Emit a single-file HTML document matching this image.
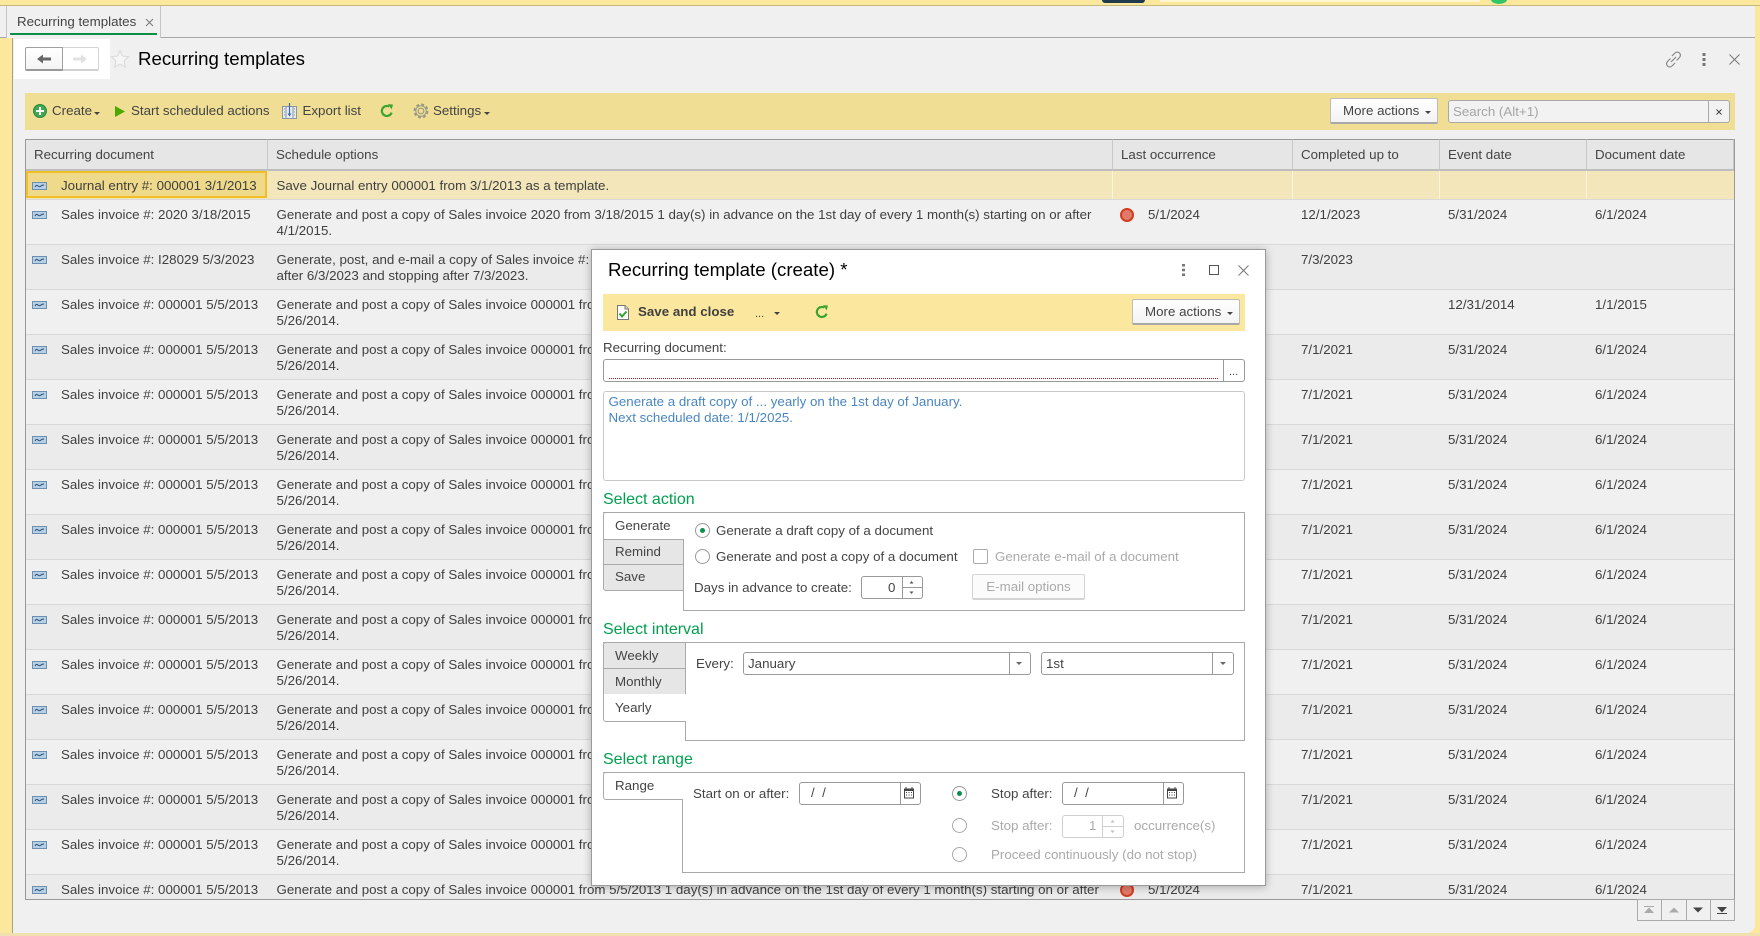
<!DOCTYPE html>
<html><head><meta charset="utf-8"><title>Recurring templates</title>
<style>
*{box-sizing:border-box}
html,body{margin:0;padding:0;width:1760px;height:936px;overflow:hidden;background:#fbe89c;font-family:"Liberation Sans",Arial,sans-serif;font-size:13.33px;color:#444}
div,span,svg{position:absolute}
.t{white-space:nowrap;line-height:16px}
.g{color:#aaa}
.h{color:#00a04e;font-size:16px;line-height:18px;white-space:nowrap;position:absolute;left:603px}
.r{left:26px;width:1708px;height:45px;border-bottom:1px solid #d9d9d9;overflow:hidden}
.l{background:#f0f0f0}.d{background:#ebebeb}
.r span{white-space:nowrap;line-height:16px;top:7px;color:#404040}
.a{left:35px}.b{left:250.500px}.c{left:1122px}.e{left:1275px}.f{left:1422px}.i{left:1569px}
.ic{left:6px;top:11px;width:15px;height:8px}
.dot{left:1094px;top:8px;width:14px;height:14px;border-radius:50%;background:#e27a6b;border:2px solid #d23c1f}
.k{top:139px;height:32px;background:#e6e6e6;border-right:1px solid #c8c8c8;border-bottom:2px solid #bdbdbd;line-height:29px;padding-left:8px;white-space:nowrap;color:#444;border-top:1px solid #999}
.btn{background:linear-gradient(#fff,#f3f3f3);border:1px solid #bcbcbc;border-bottom:2px solid #a8a8a8;border-radius:2px;white-space:nowrap;color:#444;line-height:24px}
.car{width:0;height:0;border-left:3px solid transparent;border-right:3px solid transparent;border-top:3px solid #444}
.box{background:#fff;border:1px solid #a9a9a9}
.tab{left:603px;border:1px solid #a9a9a9;background:#e6e6e6;padding-left:11px;color:#444;white-space:nowrap}
.tw{background:#fff;border-right:none}
.inp{background:#fff;border:1px solid #999;border-radius:3px}
.sp{top:0;bottom:0;width:1px;background:#999}
.rad{width:15px;height:15px;border-radius:50%;border:1px solid #999;background:#fff}
.rad i{position:absolute;left:4px;top:4px;width:5px;height:5px;border-radius:50%;background:#0a8f4c}
</style></head><body>
<svg width="0" height="0" style="left:0;top:0"><defs>
<symbol id="ri" viewBox="0 0 15 8"><rect x=".5" y=".5" width="14" height="7" fill="#b5cfe6" stroke="#6d90b0"/><path d="M3 5c1-2 2-2 3-1s2 1 3 0 2-1 3-1" fill="none" stroke="#2d4f70" stroke-width="1"/></symbol>
<symbol id="ref" viewBox="0 0 14 14"><path d="M11.600 8.600A5 5 0 1 1 9.300 2.600" fill="none" stroke="#3aa52e" stroke-width="2.200"/><path d="M8 0l5 .6-1.400 4.800z" fill="#3aa52e"/></symbol>
<symbol id="cal" viewBox="0 0 10 12"><rect x="0" y="1.500" width="10" height="10" fill="#444"/><rect x="1" y="4" width="8" height="6.500" fill="#fff"/><path d="M2 0v3M8 0v3" stroke="#444"/><path d="M2 5h1v1H2zM4.500 5h1v1h-1zM7 5h1v1H7zM2 7.500h1v1H2zM4.500 7.500h1v1h-1zM7 7.500h1v1H7z" fill="#444"/></symbol>
</defs></svg>

<!-- top strip -->
<div style="left:0;top:0;width:1760px;height:6px;background:#fbe89c;border-bottom:1px solid #c4b87e"></div>
<div style="left:1102px;top:0;width:43px;height:3px;background:#1e3a4c;border-radius:0 0 3px 3px"></div>
<div style="left:1160px;top:0;width:320px;height:2px;background:#fdf6d0"></div>
<div style="left:1491px;top:-5px;width:16px;height:9px;border-radius:50%;background:#2fc765"></div>

<!-- content area -->
<div style="left:0;top:6px;width:1755px;height:32px;background:#f0f0f0"></div>
<div style="left:0;top:37px;width:1755px;height:1px;background:#a8a8a8"></div>
<div style="left:0;top:38px;width:12px;height:898px;background:#fbe89c"></div>
<div style="left:12px;top:38px;width:1px;height:895px;background:#a9a27e"></div>
<div style="left:13px;top:38px;width:1742px;height:895px;background:#f0f0f0;border-radius:0 0 8px 0"></div>
<div style="left:0;top:933px;width:1760px;height:3px;background:#f0e0b0"></div>

<!-- tab -->
<div style="left:6px;top:6px;width:155px;height:32px;background:#f0f0f0;border-left:1px solid #c4c4c4;border-right:1px solid #c4c4c4"></div>
<div class="t" style="left:17px;top:14px;color:#444">Recurring templates</div>
<svg style="left:145px;top:18px" width="9" height="9" viewBox="0 0 9 9"><path d="M1 1l7 7M8 1L1 8" stroke="#777" stroke-width="1"/></svg>
<div style="left:10px;top:33px;width:147px;height:2px;background:#0b8f45"></div>

<!-- nav -->
<div style="left:14px;top:39px;width:96px;height:40px;background:#fff"></div>
<div style="left:62px;top:47px;width:37px;height:24px;background:#fff;border:1px solid #d4d4d4;border-bottom:2px solid #d0d0d0;border-radius:0 2px 2px 0"></div>
<div style="left:25px;top:47px;width:38px;height:24px;background:linear-gradient(#fff,#f4f4f4);border:1px solid #a0a0a0;border-bottom:2px solid #999;border-radius:2px 0 0 2px"></div>
<svg style="left:37px;top:53px" width="14" height="12" viewBox="0 0 14 12"><path d="M0 6l6-4.500v3h8v3H6v3z" fill="#666"/></svg>
<svg style="left:73px;top:53px" width="14" height="12" viewBox="0 0 14 12"><path d="M14 6L8 1.500v3H0v3h8v3z" fill="#e2e2e2"/></svg>
<svg style="left:110px;top:49px" width="20" height="20" viewBox="0 0 20 20"><path d="M10 1.500l2.600 5.600 6 .7-4.500 4.100 1.300 6L10 15l-5.400 2.900 1.300-6L1.400 7.800l6-.7z" fill="#f5f5f5" stroke="#dcdcdc" stroke-width="1.200"/></svg>
<div class="t" style="left:138px;top:48px;font-size:18.67px;line-height:22px;color:#000">Recurring templates</div>
<svg style="left:1665px;top:51px" width="17" height="17" viewBox="0 0 17 17"><g fill="none" stroke="#888" stroke-width="1.200"><path d="M7 5l3-3a3 3 0 0 1 4.500 4.500L11.500 9.500"/><path d="M10 12l-3 3a3 3 0 0 1-4.500-4.500L5.500 7.500"/><path d="M6 11l5-5"/></g></svg>
<svg style="left:1702px;top:53px" width="4" height="13" viewBox="0 0 4 13"><path d="M0.500 0h3v3h-3zM0.500 5h3v3h-3zM0.500 10h3v3h-3z" fill="#777"/></svg>
<svg style="left:1729px;top:54px" width="11" height="11" viewBox="0 0 11 11"><path d="M.5.500l10 10M10.500.500l-10 10" stroke="#777" stroke-width="1"/></svg>

<!-- main toolbar -->
<div style="left:25px;top:93px;width:1710px;height:37px;background:#efde93"></div>
<svg style="left:33px;top:104px" width="14" height="14" viewBox="0 0 14 14"><circle cx="7" cy="7" r="6.500" fill="#3fa652" stroke="#2c8c40"/><path d="M6 3h2v3h3v2H8v3H6V8H3V6h3z" fill="#fff"/></svg>
<div class="t" style="left:52px;top:103px">Create</div><div class="car" style="left:94px;top:112px"></div>
<svg style="left:115px;top:106px" width="10" height="11" viewBox="0 0 10 11"><path d="M0 0l10 5.500L0 11z" fill="#4aa800"/></svg>
<div class="t" style="left:131px;top:103px">Start scheduled actions</div>
<svg style="left:282px;top:102px" width="15" height="17" viewBox="0 0 15 17"><rect x=".5" y="4.500" width="14" height="12" fill="#e6ecf2" stroke="#8a96a2"/><path d="M4 4.500v12M11 4.500v12M2 7h1M2 10h1M2 13h1M12 7h1M12 10h1M12 13h1" stroke="#8a96a2"/><path d="M7.500 1v12" stroke="#3b6ea5" stroke-width="1.200"/><path d="M5.500 11.500l2 3 2-3z" fill="#3b6ea5"/></svg>
<div class="t" style="left:302.500px;top:103px">Export list</div>
<svg style="left:380px;top:104px" width="14" height="14"><use href="#ref"/></svg>
<svg style="left:413px;top:103px" width="16" height="16" viewBox="0 0 16 16"><g fill="none" stroke="#9a9a84"><circle cx="8" cy="8" r="2.800" stroke-width="1.100"/><circle cx="8" cy="8" r="5.200" stroke-width="1"/><circle cx="8" cy="8" r="6.500" stroke-width="2" stroke-dasharray="3 2.100"/></g></svg>
<div class="t" style="left:433px;top:103px">Settings</div><div class="car" style="left:484px;top:112px"></div>
<div class="btn" style="left:1330px;top:98px;width:108px;height:26px;padding-left:12px">More actions</div><div class="car" style="left:1425px;top:111px"></div>
<div style="left:1448px;top:100px;width:282px;height:23px;background:#f2f2f2;border:1px solid #a8a8a8;border-radius:3px"></div>
<div style="left:1708px;top:100px;width:1px;height:23px;background:#a8a8a8"></div>
<div class="t g" style="left:1453px;top:104px;color:#a5a5a5">Search (Alt+1)</div>
<svg style="left:1716px;top:109px" width="6" height="6" viewBox="0 0 6 6"><path d="M.5.500l5 5M5.500.500l-5 5" stroke="#444" stroke-width="1"/></svg>

<!-- table -->
<div style="left:25px;top:139px;width:1710px;height:761px;background:#f0f0f0;border:1px solid #999"></div>
<div class="k" style="left:26px;width:242px">Recurring document</div>
<div class="k" style="left:268px;width:845px">Schedule options</div>
<div class="k" style="left:1113px;width:180px">Last occurrence</div>
<div class="k" style="left:1293px;width:147px">Completed up to</div>
<div class="k" style="left:1440px;width:147px">Event date</div>
<div class="k" style="left:1587px;width:147px">Document date</div>

<!-- row 1 -->
<div style="left:26px;top:171px;width:1708px;height:29px;background:#f2e6ba;border-bottom:1px solid #d9d9d9"></div>
<div style="left:1112px;top:171px;width:1px;height:28px;background:#fbf5de"></div>
<div style="left:1292px;top:171px;width:1px;height:28px;background:#fbf5de"></div>
<div style="left:1439px;top:171px;width:1px;height:28px;background:#fbf5de"></div>
<div style="left:1586px;top:171px;width:1px;height:28px;background:#fbf5de"></div>
<div style="left:26px;top:171px;width:241px;height:27px;background:#efd98a;border:2px solid #efbf25"></div>
<svg style="left:32px;top:182px" width="15" height="8"><use href="#ri"/></svg>
<div class="t" style="left:61px;top:178px;color:#404040">Journal entry #: 000001 3/1/2013</div>
<div class="t" style="left:276.500px;top:178px;color:#404040">Save Journal entry 000001 from 3/1/2013 as a template.</div>

<!-- rows -->
<div class="r l" style="top:200px"><svg class="ic" width="15" height="8"><use href="#ri"/></svg><span class="a">Sales invoice #: 2020 3/18/2015</span><span class="b">Generate and post a copy of Sales invoice 2020 from 3/18/2015 1 day(s) in advance on the 1st day of every 1 month(s) starting on or after<br>4/1/2015.</span><div class="dot"></div><span class="c">5/1/2024</span><span class="e">12/1/2023</span><span class="f">5/31/2024</span><span class="i">6/1/2024</span></div>
<div class="r d" style="top:245px"><svg class="ic" width="15" height="8"><use href="#ri"/></svg><span class="a">Sales invoice #: I28029 5/3/2023</span><span class="b">Generate, post, and e-mail a copy of Sales invoice #:<br>after 6/3/2023 and stopping after 7/3/2023.</span><span class="e">7/3/2023</span></div>
<div class="r l" style="top:290px"><svg class="ic" width="15" height="8"><use href="#ri"/></svg><span class="a">Sales invoice #: 000001 5/5/2013</span><span class="b">Generate and post a copy of Sales invoice 000001 from<br>5/26/2014.</span><span class="f">12/31/2014</span><span class="i">1/1/2015</span></div>
<div class="r d" style="top:335px"><svg class="ic" width="15" height="8"><use href="#ri"/></svg><span class="a">Sales invoice #: 000001 5/5/2013</span><span class="b">Generate and post a copy of Sales invoice 000001 from<br>5/26/2014.</span><span class="e">7/1/2021</span><span class="f">5/31/2024</span><span class="i">6/1/2024</span></div>
<div class="r l" style="top:380px"><svg class="ic" width="15" height="8"><use href="#ri"/></svg><span class="a">Sales invoice #: 000001 5/5/2013</span><span class="b">Generate and post a copy of Sales invoice 000001 from<br>5/26/2014.</span><span class="e">7/1/2021</span><span class="f">5/31/2024</span><span class="i">6/1/2024</span></div>
<div class="r d" style="top:425px"><svg class="ic" width="15" height="8"><use href="#ri"/></svg><span class="a">Sales invoice #: 000001 5/5/2013</span><span class="b">Generate and post a copy of Sales invoice 000001 from<br>5/26/2014.</span><span class="e">7/1/2021</span><span class="f">5/31/2024</span><span class="i">6/1/2024</span></div>
<div class="r l" style="top:470px"><svg class="ic" width="15" height="8"><use href="#ri"/></svg><span class="a">Sales invoice #: 000001 5/5/2013</span><span class="b">Generate and post a copy of Sales invoice 000001 from<br>5/26/2014.</span><span class="e">7/1/2021</span><span class="f">5/31/2024</span><span class="i">6/1/2024</span></div>
<div class="r d" style="top:515px"><svg class="ic" width="15" height="8"><use href="#ri"/></svg><span class="a">Sales invoice #: 000001 5/5/2013</span><span class="b">Generate and post a copy of Sales invoice 000001 from<br>5/26/2014.</span><span class="e">7/1/2021</span><span class="f">5/31/2024</span><span class="i">6/1/2024</span></div>
<div class="r l" style="top:560px"><svg class="ic" width="15" height="8"><use href="#ri"/></svg><span class="a">Sales invoice #: 000001 5/5/2013</span><span class="b">Generate and post a copy of Sales invoice 000001 from<br>5/26/2014.</span><span class="e">7/1/2021</span><span class="f">5/31/2024</span><span class="i">6/1/2024</span></div>
<div class="r d" style="top:605px"><svg class="ic" width="15" height="8"><use href="#ri"/></svg><span class="a">Sales invoice #: 000001 5/5/2013</span><span class="b">Generate and post a copy of Sales invoice 000001 from<br>5/26/2014.</span><span class="e">7/1/2021</span><span class="f">5/31/2024</span><span class="i">6/1/2024</span></div>
<div class="r l" style="top:650px"><svg class="ic" width="15" height="8"><use href="#ri"/></svg><span class="a">Sales invoice #: 000001 5/5/2013</span><span class="b">Generate and post a copy of Sales invoice 000001 from<br>5/26/2014.</span><span class="e">7/1/2021</span><span class="f">5/31/2024</span><span class="i">6/1/2024</span></div>
<div class="r d" style="top:695px"><svg class="ic" width="15" height="8"><use href="#ri"/></svg><span class="a">Sales invoice #: 000001 5/5/2013</span><span class="b">Generate and post a copy of Sales invoice 000001 from<br>5/26/2014.</span><span class="e">7/1/2021</span><span class="f">5/31/2024</span><span class="i">6/1/2024</span></div>
<div class="r l" style="top:740px"><svg class="ic" width="15" height="8"><use href="#ri"/></svg><span class="a">Sales invoice #: 000001 5/5/2013</span><span class="b">Generate and post a copy of Sales invoice 000001 from<br>5/26/2014.</span><span class="e">7/1/2021</span><span class="f">5/31/2024</span><span class="i">6/1/2024</span></div>
<div class="r d" style="top:785px"><svg class="ic" width="15" height="8"><use href="#ri"/></svg><span class="a">Sales invoice #: 000001 5/5/2013</span><span class="b">Generate and post a copy of Sales invoice 000001 from<br>5/26/2014.</span><span class="e">7/1/2021</span><span class="f">5/31/2024</span><span class="i">6/1/2024</span></div>
<div class="r l" style="top:830px"><svg class="ic" width="15" height="8"><use href="#ri"/></svg><span class="a">Sales invoice #: 000001 5/5/2013</span><span class="b">Generate and post a copy of Sales invoice 000001 from<br>5/26/2014.</span><span class="e">7/1/2021</span><span class="f">5/31/2024</span><span class="i">6/1/2024</span></div>
<div class="r d" style="top:875px;height:24px;border-bottom:none"><svg class="ic" width="15" height="8"><use href="#ri"/></svg><span class="a">Sales invoice #: 000001 5/5/2013</span><span class="b">Generate and post a copy of Sales invoice 000001 from 5/5/2013 1 day(s) in advance on the 1st day of every 1 month(s) starting on or after</span><div class="dot"></div><span class="c">5/1/2024</span><span class="e">7/1/2021</span><span class="f">5/31/2024</span><span class="i">6/1/2024</span></div>

<!-- pager -->
<div style="left:1637px;top:899px;width:98px;height:22px;border:1px solid #aaa;background:#f0f0f0"></div>
<div style="left:1661px;top:899px;width:1px;height:22px;background:#aaa"></div>
<div style="left:1686px;top:899px;width:1px;height:22px;background:#aaa"></div>
<div style="left:1710px;top:899px;width:1px;height:22px;background:#aaa"></div>
<svg style="left:1644px;top:906px" width="10" height="8" viewBox="0 0 10 8"><path d="M0 0h10v1H0zM5 1.500l5 5.500H0z" fill="#aaa"/></svg>
<svg style="left:1669px;top:907px" width="10" height="6" viewBox="0 0 10 6"><path d="M5 .5l5 5H0z" fill="#aaa"/></svg>
<svg style="left:1693px;top:907px" width="10" height="6" viewBox="0 0 10 6"><path d="M5 5.500L0 .5h10z" fill="#444"/></svg>
<svg style="left:1717px;top:906px" width="10" height="8" viewBox="0 0 10 8"><path d="M0 7h10v1H0zM5 6.500L0 1h10z" fill="#444"/></svg>

<!-- dialog -->
<div style="left:591px;top:249px;width:675px;height:637px;background:#fff;border:1px solid #9a9a9a;box-shadow:0 1px 8px rgba(0,0,0,.28)"></div>
<div class="t" style="left:608px;top:259px;font-size:18.67px;line-height:22px;color:#000">Recurring template (create) *</div>
<svg style="left:1182px;top:264px" width="3" height="12" viewBox="0 0 3 12"><path d="M0 0h3v2.500H0zM0 4.700h3v2.500H0zM0 9.500h3V12H0z" fill="#777"/></svg>
<div style="left:1209px;top:265px;width:10px;height:10px;border:1px solid #555"></div>
<svg style="left:1238px;top:265px" width="11" height="11" viewBox="0 0 11 11"><path d="M.5.500l10 10M10.500.500l-10 10" stroke="#777"/></svg>

<div style="left:603px;top:294px;width:642px;height:37px;background:#fbe89e"></div>
<svg style="left:617px;top:305px" width="12" height="15" viewBox="0 0 12 15"><path d="M.5.500h7.500l3.500 3.500v10.500H.5z" fill="#fff" stroke="#777"/><path d="M8 .5v3.500h3.500" fill="#ddd" stroke="#777"/><path d="M2.500 8.500l2.500 3 4.500-5" fill="none" stroke="#2ea52e" stroke-width="2"/></svg>
<div class="t" style="left:638px;top:304px;font-weight:bold;color:#404040">Save and close</div>
<div class="t" style="left:755px;top:306px;font-size:11px">...</div><div class="car" style="left:774px;top:312px"></div>
<svg style="left:815px;top:305px" width="14" height="14"><use href="#ref"/></svg>
<div class="btn" style="left:1132px;top:299px;width:108px;height:26px;padding-left:12px">More actions</div><div class="car" style="left:1227px;top:312px"></div>

<div class="t" style="left:603px;top:340px">Recurring document:</div>
<div class="inp" style="left:603px;top:359px;width:642px;height:23px"><div class="sp" style="left:619px"></div></div>
<div style="left:609px;top:378px;width:609px;height:0;border-top:1px dotted #f00"></div>
<div class="t" style="left:1229px;top:366px;font-size:11px;line-height:12px">...</div>
<div style="left:603px;top:391px;width:642px;height:90px;background:#fff;border:1px solid #c8c8c8;border-radius:3px"></div>
<div class="t" style="left:608.500px;top:394px;color:#4a86c0">Generate a draft copy of ... yearly on the 1st day of January.<br>Next scheduled date: 1/1/2025.</div>

<!-- select action -->
<div class="h" style="top:491px">Select action</div>
<div style="left:603px;top:512px;width:642px;height:1px;background:#a9a9a9"></div>
<div class="box" style="left:683px;top:512px;width:562px;height:99px"></div>
<div class="tab tw" style="top:512px;width:81px;height:28px;border-radius:3px 0 0 0;border-bottom:none;line-height:26px">Generate</div>
<div class="tab" style="top:539px;width:81px;height:26px;line-height:24px">Remind</div>
<div class="tab" style="top:564px;width:81px;height:27px;border-radius:0 0 0 3px;line-height:24px">Save</div>
<div class="rad" style="left:695px;top:523px"><i></i></div>
<div class="t" style="left:716px;top:523px">Generate a draft copy of a document</div>
<div class="rad" style="left:695px;top:549px"></div>
<div class="t" style="left:716px;top:549px">Generate and post a copy of a document</div>
<div style="left:973px;top:549px;width:15px;height:15px;border:1px solid #aaa;border-radius:2px;background:#fff"></div>
<div class="t g" style="left:995px;top:549px">Generate e-mail of a document</div>
<div class="t" style="left:694px;top:580px">Days in advance to create:</div>
<div class="inp" style="left:861px;top:576px;width:62px;height:23px"><div class="sp" style="left:40px"></div><div style="left:40px;right:0;top:10px;height:1px;background:#999"></div></div>
<div class="t" style="left:888px;top:580px">0</div>
<svg style="left:908px;top:580px" width="7" height="15" viewBox="0 0 7 15"><path d="M3.500 1l2 2.500h-4zM3.500 14l-2-2.500h4z" fill="#555"/></svg>
<div class="btn" style="left:972px;top:574px;width:113px;height:26px;background:#fbfbfb;border-color:#d4d4d4;color:#aaa;text-align:center">E-mail options</div>

<!-- select interval -->
<div class="h" style="top:621px">Select interval</div>
<div style="left:603px;top:642px;width:642px;height:1px;background:#a9a9a9"></div>
<div class="box" style="left:685px;top:642px;width:560px;height:99px"></div>
<div class="tab" style="top:642px;width:83px;height:27px;border-radius:3px 0 0 0;line-height:25px">Weekly</div>
<div class="tab" style="top:668px;width:83px;height:27px;line-height:25px">Monthly</div>
<div class="tab tw" style="top:694px;width:83px;height:28px;border-top:none;border-radius:0 0 0 3px;line-height:27px">Yearly</div>
<div class="t" style="left:696px;top:656px">Every:</div>
<div class="inp" style="left:743px;top:652px;width:288px;height:23px"><div class="sp" style="left:265px"></div></div>
<div class="t" style="left:748px;top:656px">January</div>
<div class="car" style="left:1016px;top:662px;border-top-color:#666"></div>
<div class="inp" style="left:1041px;top:652px;width:193px;height:23px"><div class="sp" style="left:170px"></div></div>
<div class="t" style="left:1046px;top:656px">1st</div>
<div class="car" style="left:1220px;top:662px;border-top-color:#666"></div>

<!-- select range -->
<div class="h" style="top:751px">Select range</div>
<div style="left:603px;top:772px;width:642px;height:1px;background:#a9a9a9"></div>
<div class="box" style="left:682px;top:772px;width:563px;height:101px"></div>
<div class="tab tw" style="top:772px;width:80px;height:28px;border-radius:3px 0 0 3px;line-height:26px">Range</div>
<div class="t" style="left:693px;top:786px">Start on or after:</div>
<div class="inp" style="left:799px;top:782px;width:122px;height:23px"><div class="sp" style="left:100px"></div></div>
<div class="t" style="left:811px;top:785px">/&nbsp;&nbsp;/</div>
<svg style="left:904px;top:787px" width="10" height="12"><use href="#cal"/></svg>
<div class="rad" style="left:952px;top:786px"><i></i></div>
<div class="t" style="left:991px;top:786px">Stop after:</div>
<div class="inp" style="left:1062px;top:782px;width:122px;height:23px"><div class="sp" style="left:100px"></div></div>
<div class="t" style="left:1074px;top:785px">/&nbsp;&nbsp;/</div>
<svg style="left:1167px;top:787px" width="10" height="12"><use href="#cal"/></svg>
<div class="rad" style="left:952px;top:818px;border-color:#aaa"></div>
<div class="t g" style="left:991px;top:818px">Stop after:</div>
<div class="inp" style="left:1062px;top:815px;width:62px;height:23px;border-color:#cfcfcf"><div class="sp" style="left:39px;background:#cfcfcf"></div><div style="left:39px;right:0;top:10px;height:1px;background:#cfcfcf"></div></div>
<div class="t g" style="left:1089px;top:818px">1</div>
<svg style="left:1109px;top:819px" width="7" height="15" viewBox="0 0 7 15"><path d="M3.500 1l2 2.500h-4zM3.500 14l-2-2.500h4z" fill="#bbb"/></svg>
<div class="t g" style="left:1134px;top:818px">occurrence(s)</div>
<div class="rad" style="left:952px;top:847px;border-color:#aaa"></div>
<div class="t g" style="left:991px;top:847px">Proceed continuously (do not stop)</div>
</body></html>
